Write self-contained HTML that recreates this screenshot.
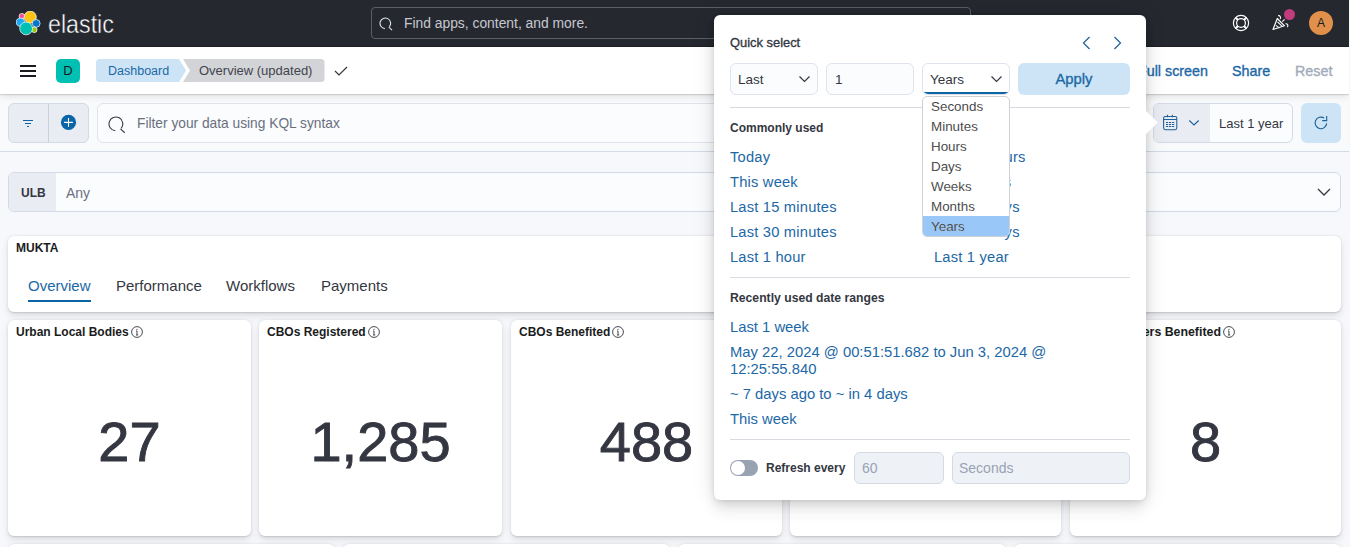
<!DOCTYPE html>
<html><head><meta charset="utf-8">
<style>
*{box-sizing:border-box;}
html,body{margin:0;padding:0;}
body{width:1350px;height:547px;overflow:hidden;position:relative;background:#f7f8fc;font-family:"Liberation Sans",sans-serif;color:#343741;}
.a{position:absolute;}
.t{position:absolute;white-space:nowrap;line-height:1;}
.lnk{color:#1c68a6;}
.b{font-weight:bold;}
.sb{-webkit-text-stroke:0.35px currentColor;}
</style></head>
<body>

<!-- ===== Top dark header ===== -->
<div class="a" style="left:0;top:0;width:1349px;height:47px;background:#25282f;border-bottom:1px solid #1d1f25;"></div>
<div class="a" style="left:1349px;top:0;width:1px;height:547px;background:#f6f7f9;z-index:5;"></div>
<!-- logo -->
<svg class="a" style="left:16px;top:11px" width="25" height="25" viewBox="0 0 25 25">
  <circle cx="5.9" cy="5.2" r="2.8" fill="#f04e98" stroke="#fff" stroke-width="0.7"/>
  <circle cx="14.2" cy="6.1" r="6.1" fill="#fec514" stroke="#fff" stroke-width="0.7"/>
  <circle cx="4.4" cy="11.2" r="4.1" fill="#1ba9f5" stroke="#fff" stroke-width="0.7"/>
  <circle cx="20.2" cy="12.4" r="3.9" fill="#0077cc" stroke="#fff" stroke-width="0.7"/>
  <circle cx="18.3" cy="18.8" r="2.8" fill="#93c90e" stroke="#fff" stroke-width="0.7"/>
  <circle cx="10.1" cy="17.4" r="6.4" fill="#00bfb3" stroke="#fff" stroke-width="0.7"/>
</svg>
<div class="t" style="left:48px;top:12px;font-size:25px;color:#fff;transform:scaleX(0.93);transform-origin:0 0;-webkit-text-stroke:0.45px #25282f;">elastic</div>

<!-- global search -->
<div class="a" style="left:371px;top:7px;width:600px;height:32px;border:1px solid #5a5e66;border-radius:4px;background:#25282f;"></div>
<svg class="a" style="left:379px;top:17px" width="16" height="16" viewBox="0 0 16 16"><path d="M5.84 11.58 A5.3 5.3 0 1 1 10.36 9.71 M9.80 10.12 L13.08 13.08" fill="none" stroke="#dfe5ef" stroke-width="1.1"/></svg>
<div class="t" style="left:404px;top:17px;font-size:13.85px;color:#c5c8d0;">Find apps, content, and more.</div>

<!-- help icon -->
<svg class="a" style="left:1231px;top:13px" width="20" height="20" viewBox="0 0 20 20">
  <circle cx="10" cy="10" r="7.6" fill="none" stroke="#fff" stroke-width="1.2"/>
  <circle cx="10" cy="10" r="4.4" fill="none" stroke="#fff" stroke-width="1.2"/>
  <path d="M4.6 4.6 L7 7 M15.4 4.6 L13 7 M4.6 15.4 L7 13 M15.4 15.4 L13 13" stroke="#fff" stroke-width="2"/>
</svg>
<!-- news icon -->
<svg class="a" style="left:1271px;top:13px" width="20" height="20" viewBox="0 0 20 20">
  <path d="M2 16.5 L6.3 5.5 L13.5 12.8 Z" fill="none" stroke="#fff" stroke-width="1.2" stroke-linejoin="round"/>
  <path d="M5 12.3 L8.3 15.2 M6.5 8.8 L11 13.2" stroke="#fff" stroke-width="1.1"/>
  <path d="M7 2.8 C9 2.2 10.2 4.2 9.2 6" fill="none" stroke="#fff" stroke-width="1.1"/>
  <path d="M14.5 10.8 C16.5 10.5 17.8 12.5 16.2 14.2" fill="none" stroke="#fff" stroke-width="1.1"/>
  <path d="M11.3 8.6 L13.6 6.3" stroke="#fff" stroke-width="1.1"/>
</svg>
<div class="a" style="left:1284px;top:9px;width:11px;height:11px;border-radius:50%;background:#c13c7e;"></div>
<!-- avatar -->
<div class="a" style="left:1309px;top:11px;width:24px;height:24px;border-radius:50%;background:#e0904a;"></div>
<div class="t" style="left:1309px;top:16.5px;width:24px;text-align:center;font-size:12px;color:#1a1c21;">A</div>

<!-- ===== Secondary bar ===== -->
<div class="a" style="left:0;top:94px;width:1349px;height:58px;background:#f9fafc;border-bottom:1px solid #d3dae6;"></div>

<div class="a" style="left:0;top:47px;width:1349px;height:47px;background:#fff;box-shadow:0 1px 1px rgba(0,0,0,0.12),0 3px 7px rgba(0,0,0,0.09);"></div>
<!-- hamburger -->
<div class="a" style="left:20px;top:65px;width:16px;height:2px;background:#1a1c21;"></div>
<div class="a" style="left:20px;top:70px;width:16px;height:2px;background:#1a1c21;"></div>
<div class="a" style="left:20px;top:75px;width:16px;height:2px;background:#1a1c21;"></div>
<!-- D avatar -->
<div class="a" style="left:56px;top:59px;width:24px;height:24px;border-radius:5px;background:#00bfb3;"></div>
<div class="t" style="left:56px;top:64px;width:24px;text-align:center;font-size:13px;color:#1a1c21;">D</div>
<!-- breadcrumbs -->
<svg class="a" style="left:96px;top:59px" width="230" height="23" viewBox="0 0 230 23">
  <path d="M87 0 H225 Q228.5 0 228.5 3.5 V19.5 Q228.5 23 225 23 H87 L94 11.5 Z" fill="#d3d4d8"/>
  <path d="M3.5 0 H83 L90 11.5 L83 23 H3.5 Q0 23 0 19.5 V3.5 Q0 0 3.5 0 Z" fill="#cce4f5"/>
</svg>
<div class="t lnk" style="left:108px;top:65px;font-size:12.5px;color:#1c68a6;">Dashboard</div>
<div class="t" style="left:199px;top:64.2px;font-size:13px;color:#41444c;">Overview (updated)</div>
<svg class="a" style="left:334px;top:65px" width="14" height="12" viewBox="0 0 14 12"><path d="M1 6 L5 10 L13 2" fill="none" stroke="#343741" stroke-width="1.2"/></svg>
<!-- right links -->
<div class="t sb lnk" style="left:1138px;top:64px;font-size:14.3px;">Full screen</div>
<div class="t sb lnk" style="left:1232px;top:64px;font-size:14.3px;">Share</div>
<div class="t sb" style="left:1295px;top:64px;font-size:14.3px;color:#a2abba;">Reset</div>

<!-- ===== Query bar ===== -->
<!-- filter btn group -->
<div class="a" style="left:8px;top:103px;width:81px;height:40px;border:1px solid #d3dae6;border-radius:6px;background:#e9edf3;"></div>
<div class="a" style="left:48px;top:104px;width:1px;height:38px;background:#c9d1de;"></div>
<svg class="a" style="left:22px;top:116px" width="12" height="12" viewBox="0 0 12 12"><path d="M1 4.5 H11 M3 7.5 H9 M5 10.5 H7" stroke="#0b64a6" stroke-width="1.1"/></svg>
<svg class="a" style="left:60px;top:114px" width="17" height="17" viewBox="0 0 17 17"><circle cx="8.5" cy="8.4" r="7.6" fill="#0b64a6"/><path d="M8.5 4 V12.8 M4.1 8.4 H12.9" stroke="#fff" stroke-width="1.1"/></svg>
<!-- query input -->
<div class="a" style="left:97px;top:103px;width:1048px;height:40px;border:1px solid #dfe3ec;border-radius:6px;background:#fbfcfd;"></div>
<svg class="a" style="left:108px;top:116px" width="20" height="20" viewBox="0 0 20 20"><path d="M7.30 14.77 A6.9 6.9 0 1 1 13.19 12.34 M12.45 12.87 L16.73 16.73" fill="none" stroke="#343741" stroke-width="1.1"/></svg>
<div class="t" style="left:137px;top:117px;font-size:13.75px;color:#69707d;">Filter your data using KQL syntax</div>
<!-- date picker -->
<div class="a" style="left:1153px;top:103px;width:140px;height:40px;border:1px solid #d3dae6;border-radius:6px;background:#fbfcfd;overflow:hidden;"><div class="a" style="left:0;top:0;width:56px;height:40px;background:#e9edf3;"></div></div>
<svg class="a" style="left:1160px;top:112px" width="20" height="20" viewBox="0 0 20 20">
  <rect x="3.6" y="4.5" width="13.2" height="13.2" rx="1.6" fill="none" stroke="#1d5f98" stroke-width="1.05"/>
  <path d="M3.6 7.5 H16.8 M7.5 2.8 V5.2 M12.4 2.8 V5.2" stroke="#1d5f98" stroke-width="1.05"/>
  <path d="M6 10.5 h2.2 M9 10.5 h2.2 M12 10.5 h2.2 M6 12.5 h2.2 M9 12.5 h2.2 M12 12.5 h2.2 M6 14.5 h2.2 M9 14.5 h2.2 M12 14.5 h2.2" stroke="#1d5f98" stroke-width="1"/>
</svg>
<svg class="a" style="left:1188px;top:119px" width="12" height="8" viewBox="0 0 12 8"><path d="M1.3 1.5 L6 6 L10.7 1.5" fill="none" stroke="#1d5f98" stroke-width="1.1"/></svg>
<div class="t" style="left:1219px;top:117px;font-size:13px;color:#343741;">Last 1 year</div>
<!-- refresh -->
<div class="a" style="left:1301px;top:103px;width:40px;height:40px;border-radius:6px;background:#cce4f5;"></div>
<svg class="a" style="left:1312px;top:112px" width="20" height="20" viewBox="0 0 20 20"><path d="M12.23 6.15 A5.8 5.8 0 1 0 14.68 11.41" fill="none" stroke="#1d5f98" stroke-width="1.1"/><path d="M14.7 4 V8.6 H10.2" fill="none" stroke="#1d5f98" stroke-width="1.1"/></svg>

<!-- ===== ULB control ===== -->
<div class="a" style="left:8px;top:172px;width:1333px;height:40px;border:1px solid #d3dae6;border-radius:6px;background:#fbfcfd;overflow:hidden;"><div class="a" style="left:0;top:0;width:47px;height:40px;background:#e9edf3;"></div></div>
<div class="t b" style="left:21px;top:187px;font-size:12px;color:#343741;">ULB</div>
<div class="t" style="left:66px;top:186px;font-size:14px;color:#69707d;">Any</div>
<svg class="a" style="left:1317px;top:188px" width="14" height="9" viewBox="0 0 14 9"><path d="M1 1 L7 7 L13 1" fill="none" stroke="#343741" stroke-width="1.3"/></svg>

<!-- ===== MUKTA panel ===== -->
<div class="a" style="left:8px;top:236px;width:1333px;height:76px;background:#fff;border-radius:6px;box-shadow:0 0.7px 1.4px rgba(0,0,0,0.1),0 1.9px 4px rgba(0,0,0,0.07),0 4.5px 10px rgba(0,0,0,0.07);"></div>
<div class="t b" style="left:16px;top:242px;font-size:12px;color:#1a1c21;">MUKTA</div>
<div class="t lnk" style="left:28px;top:278px;font-size:15px;">Overview</div>
<div class="a" style="left:28px;top:300px;width:63px;height:2px;background:#0b64a6;"></div>
<div class="t" style="left:116px;top:278px;font-size:15px;">Performance</div>
<div class="t" style="left:226px;top:278px;font-size:15px;">Workflows</div>
<div class="t" style="left:321px;top:278px;font-size:15px;">Payments</div>

<!-- ===== metric cards ===== -->
<div class="a" style="left:8px;top:320px;width:243px;height:216px;background:#fff;border-radius:6px;box-shadow:0 0.7px 1.4px rgba(0,0,0,0.1),0 1.9px 4px rgba(0,0,0,0.07),0 4.5px 10px rgba(0,0,0,0.07);"></div>
<div class="t b" style="left:16px;top:326px;font-size:12px;color:#1a1c21;">Urban Local Bodies<svg style="margin-left:2px;vertical-align:-2px" width="12" height="12" viewBox="0 0 12 12"><circle cx="6" cy="6" r="5.4" fill="none" stroke="#343741" stroke-width="0.9"/><path d="M6 5 V9 M5 9 H7.2 M5 5 H6" stroke="#343741" stroke-width="0.9"/><circle cx="6" cy="3.3" r="0.6" fill="#343741"/></svg></div>
<div class="t" style="left:8px;top:413.5px;width:243px;text-align:center;font-size:56px;color:#343741;-webkit-text-stroke:0.9px #343741;">27</div>
<div class="a" style="left:259px;top:320px;width:243px;height:216px;background:#fff;border-radius:6px;box-shadow:0 0.7px 1.4px rgba(0,0,0,0.1),0 1.9px 4px rgba(0,0,0,0.07),0 4.5px 10px rgba(0,0,0,0.07);"></div>
<div class="t b" style="left:267px;top:326px;font-size:12px;color:#1a1c21;">CBOs Registered<svg style="margin-left:2px;vertical-align:-2px" width="12" height="12" viewBox="0 0 12 12"><circle cx="6" cy="6" r="5.4" fill="none" stroke="#343741" stroke-width="0.9"/><path d="M6 5 V9 M5 9 H7.2 M5 5 H6" stroke="#343741" stroke-width="0.9"/><circle cx="6" cy="3.3" r="0.6" fill="#343741"/></svg></div>
<div class="t" style="left:259px;top:413.5px;width:243px;text-align:center;font-size:56px;color:#343741;-webkit-text-stroke:0.9px #343741;">1,285</div>
<div class="a" style="left:511px;top:320px;width:271px;height:216px;background:#fff;border-radius:6px;box-shadow:0 0.7px 1.4px rgba(0,0,0,0.1),0 1.9px 4px rgba(0,0,0,0.07),0 4.5px 10px rgba(0,0,0,0.07);"></div>
<div class="t b" style="left:519px;top:326px;font-size:12px;color:#1a1c21;">CBOs Benefited<svg style="margin-left:2px;vertical-align:-2px" width="12" height="12" viewBox="0 0 12 12"><circle cx="6" cy="6" r="5.4" fill="none" stroke="#343741" stroke-width="0.9"/><path d="M6 5 V9 M5 9 H7.2 M5 5 H6" stroke="#343741" stroke-width="0.9"/><circle cx="6" cy="3.3" r="0.6" fill="#343741"/></svg></div>
<div class="t" style="left:511px;top:413.5px;width:271px;text-align:center;font-size:56px;color:#343741;-webkit-text-stroke:0.9px #343741;">488</div>
<div class="a" style="left:790px;top:320px;width:271px;height:216px;background:#fff;border-radius:6px;box-shadow:0 0.7px 1.4px rgba(0,0,0,0.1),0 1.9px 4px rgba(0,0,0,0.07),0 4.5px 10px rgba(0,0,0,0.07);"></div>
<div class="t b" style="left:798px;top:326px;font-size:12px;color:#1a1c21;">Wage Seekers Registered<svg style="margin-left:2px;vertical-align:-2px" width="12" height="12" viewBox="0 0 12 12"><circle cx="6" cy="6" r="5.4" fill="none" stroke="#343741" stroke-width="0.9"/><path d="M6 5 V9 M5 9 H7.2 M5 5 H6" stroke="#343741" stroke-width="0.9"/><circle cx="6" cy="3.3" r="0.6" fill="#343741"/></svg></div>
<div class="t" style="left:790px;top:413.5px;width:271px;text-align:center;font-size:56px;color:#343741;-webkit-text-stroke:0.9px #343741;">1,943</div>
<div class="a" style="left:1070px;top:320px;width:271px;height:216px;background:#fff;border-radius:6px;box-shadow:0 0.7px 1.4px rgba(0,0,0,0.1),0 1.9px 4px rgba(0,0,0,0.07),0 4.5px 10px rgba(0,0,0,0.07);"></div>
<div class="t b" style="left:1078px;top:326px;font-size:12.35px;color:#1a1c21;">Wage Seekers Benefited<svg style="margin-left:2px;vertical-align:-2px" width="12" height="12" viewBox="0 0 12 12"><circle cx="6" cy="6" r="5.4" fill="none" stroke="#343741" stroke-width="0.9"/><path d="M6 5 V9 M5 9 H7.2 M5 5 H6" stroke="#343741" stroke-width="0.9"/><circle cx="6" cy="3.3" r="0.6" fill="#343741"/></svg></div>
<div class="t" style="left:1070px;top:413.5px;width:271px;text-align:center;font-size:56px;color:#343741;-webkit-text-stroke:0.9px #343741;">8</div>
<div class="a" style="left:8px;top:544px;width:327px;height:100px;background:#fff;border-radius:6px;box-shadow:0 0.7px 1.4px rgba(0,0,0,0.1),0 1.9px 4px rgba(0,0,0,0.07),0 4.5px 10px rgba(0,0,0,0.07);"></div>
<div class="a" style="left:343px;top:544px;width:327px;height:100px;background:#fff;border-radius:6px;box-shadow:0 0.7px 1.4px rgba(0,0,0,0.1),0 1.9px 4px rgba(0,0,0,0.07),0 4.5px 10px rgba(0,0,0,0.07);"></div>
<div class="a" style="left:678px;top:544px;width:328px;height:100px;background:#fff;border-radius:6px;box-shadow:0 0.7px 1.4px rgba(0,0,0,0.1),0 1.9px 4px rgba(0,0,0,0.07),0 4.5px 10px rgba(0,0,0,0.07);"></div>
<div class="a" style="left:1014px;top:544px;width:327px;height:100px;background:#fff;border-radius:6px;box-shadow:0 0.7px 1.4px rgba(0,0,0,0.1),0 1.9px 4px rgba(0,0,0,0.07),0 4.5px 10px rgba(0,0,0,0.07);"></div>


<!-- ===== POPOVER ===== -->
<div class="a" style="left:714px;top:15px;width:432px;height:485px;background:#fff;border-radius:6px;box-shadow:0 0 22px rgba(0,0,0,0.13),0 0.9px 4px -1px rgba(0,0,0,0.08),0 2.6px 8px -1px rgba(0,0,0,0.06),0 5.7px 12px -1px rgba(0,0,0,0.05),0 15px 15px -1px rgba(0,0,0,0.04);"></div>
<svg class="a" style="left:1145px;top:110px" width="13" height="25" viewBox="0 0 13 25"><path d="M0 0 L13 12.5 L0 25 Z" fill="#fff"/></svg>
<div class="t sb" style="left:730px;top:36.7px;font-size:12.9px;color:#343741;">Quick select</div>
<svg class="a" style="left:1082px;top:36px" width="9" height="14" viewBox="0 0 9 14"><path d="M7.5 1 L1.5 7 L7.5 13" fill="none" stroke="#1d5f98" stroke-width="1.2"/></svg>
<svg class="a" style="left:1113px;top:36px" width="9" height="14" viewBox="0 0 9 14"><path d="M1.5 1 L7.5 7 L1.5 13" fill="none" stroke="#1d5f98" stroke-width="1.2"/></svg>

<div class="a" style="left:730px;top:63px;width:88px;height:32px;border:1px solid #dfe3ec;border-radius:6px;background:#fbfcfd;"></div>
<div class="t" style="left:738px;top:72.5px;font-size:13.5px;color:#343741;">Last</div>
<svg class="a" style="left:799px;top:76px" width="11" height="7" viewBox="0 0 11 7"><path d="M0.5 0.5 L5.5 5.5 L10.5 0.5" fill="none" stroke="#343741" stroke-width="1.2"/></svg>
<div class="a" style="left:826px;top:63px;width:88px;height:32px;border:1px solid #dfe3ec;border-radius:6px;background:#fbfcfd;"></div>
<div class="t" style="left:835px;top:72.5px;font-size:13.5px;color:#343741;">1</div>
<div class="a" style="left:922px;top:63px;width:88px;height:32px;border:1px solid #dfe3ec;border-radius:6px;background:#fff;overflow:hidden;"><div class="a" style="left:0;bottom:0;width:88px;height:2px;background:#0b64a6;"></div></div>
<div class="t" style="left:930px;top:72.5px;font-size:13.5px;color:#343741;">Years</div>
<svg class="a" style="left:991px;top:76px" width="11" height="7" viewBox="0 0 11 7"><path d="M0.5 0.5 L5.5 5.5 L10.5 0.5" fill="none" stroke="#343741" stroke-width="1.2"/></svg>
<div class="a" style="left:1018px;top:63px;width:112px;height:32px;border-radius:6px;background:#cce4f5;"></div>
<div class="t sb lnk" style="left:1018px;top:72px;width:112px;text-align:center;font-size:14.8px;">Apply</div>

<div class="a" style="left:730px;top:107px;width:400px;height:1px;background:#d8dbe1;"></div>
<div class="t b" style="left:730px;top:122px;font-size:12px;color:#343741;">Commonly used</div>
<div class="t lnk" style="left:730px;top:150px;font-size:14.7px;letter-spacing:0.2px;">Today</div>
<div class="t lnk" style="left:730px;top:175px;font-size:14.7px;letter-spacing:0.2px;">This week</div>
<div class="t lnk" style="left:730px;top:200px;font-size:14.7px;letter-spacing:0.2px;">Last 15 minutes</div>
<div class="t lnk" style="left:730px;top:225px;font-size:14.7px;letter-spacing:0.2px;">Last 30 minutes</div>
<div class="t lnk" style="left:730px;top:250px;font-size:14.7px;letter-spacing:0.2px;">Last 1 hour</div>
<div class="t lnk" style="left:934px;top:150px;font-size:14.7px;letter-spacing:0.2px;">Last 24 hours</div>
<div class="t lnk" style="left:934px;top:175px;font-size:14.7px;letter-spacing:0.2px;">Last 7 days</div>
<div class="t lnk" style="left:934px;top:200px;font-size:14.7px;letter-spacing:0.2px;">Last 30 days</div>
<div class="t lnk" style="left:934px;top:225px;font-size:14.7px;letter-spacing:0.2px;">Last 90 days</div>
<div class="t lnk" style="left:934px;top:250px;font-size:14.7px;letter-spacing:0.2px;">Last 1 year</div>
<div class="a" style="left:730px;top:277px;width:400px;height:1px;background:#d8dbe1;"></div>

<div class="t b" style="left:730px;top:292px;font-size:12.2px;color:#343741;">Recently used date ranges</div>
<div class="t lnk" style="left:730px;top:319.5px;font-size:14.8px;">Last 1 week</div>
<div class="t lnk" style="left:730px;top:344.5px;font-size:14.8px;">May 22, 2024 @ 00:51:51.682 to Jun 3, 2024 @</div>
<div class="t lnk" style="left:730px;top:362px;font-size:14.8px;">12:25:55.840</div>
<div class="t lnk" style="left:730px;top:387px;font-size:14.8px;">~ 7 days ago to ~ in 4 days</div>
<div class="t lnk" style="left:730px;top:412px;font-size:14.8px;">This week</div>
<div class="a" style="left:730px;top:439px;width:400px;height:1px;background:#d8dbe1;"></div>

<div class="a" style="left:730px;top:460px;width:28px;height:16px;border-radius:8px;background:#98a2b3;"></div>
<div class="a" style="left:731px;top:461px;width:14px;height:14px;border-radius:50%;background:#fff;"></div>
<div class="t b" style="left:766px;top:462px;font-size:12px;color:#343741;">Refresh every</div>
<div class="a" style="left:854px;top:452px;width:90px;height:32px;border:1px solid #d3dae6;border-radius:6px;background:#eef2f7;"></div>
<div class="t" style="left:862px;top:461px;font-size:14px;color:#98a2b3;">60</div>
<div class="a" style="left:952px;top:452px;width:178px;height:32px;border:1px solid #d3dae6;border-radius:6px;background:#eef2f7;"></div>
<div class="t" style="left:959px;top:461px;font-size:14px;color:#98a2b3;">Seconds</div>

<!-- native select dropdown -->
<div class="a" style="left:922px;top:96px;width:88px;height:141px;background:#fff;border:1px solid #cfd1d4;border-radius:5px;overflow:hidden;">
  <div class="a" style="left:0;top:119px;width:88px;height:21px;background:#99c8f8;"></div>
</div>
<div class="t" style="left:931px;top:99.5px;font-size:13.4px;color:#333;-webkit-text-stroke:0.2px rgba(255,255,255,0.6);">Seconds</div>
<div class="t" style="left:931px;top:119.5px;font-size:13.4px;color:#333;-webkit-text-stroke:0.2px rgba(255,255,255,0.6);">Minutes</div>
<div class="t" style="left:931px;top:139.5px;font-size:13.4px;color:#333;-webkit-text-stroke:0.2px rgba(255,255,255,0.6);">Hours</div>
<div class="t" style="left:931px;top:159.5px;font-size:13.4px;color:#333;-webkit-text-stroke:0.2px rgba(255,255,255,0.6);">Days</div>
<div class="t" style="left:931px;top:179.5px;font-size:13.4px;color:#333;-webkit-text-stroke:0.2px rgba(255,255,255,0.6);">Weeks</div>
<div class="t" style="left:931px;top:199.5px;font-size:13.4px;color:#333;-webkit-text-stroke:0.2px rgba(255,255,255,0.6);">Months</div>
<div class="t" style="left:931px;top:219.5px;font-size:13.4px;color:#333;-webkit-text-stroke:0.2px rgba(255,255,255,0.6);">Years</div>

</body></html>
